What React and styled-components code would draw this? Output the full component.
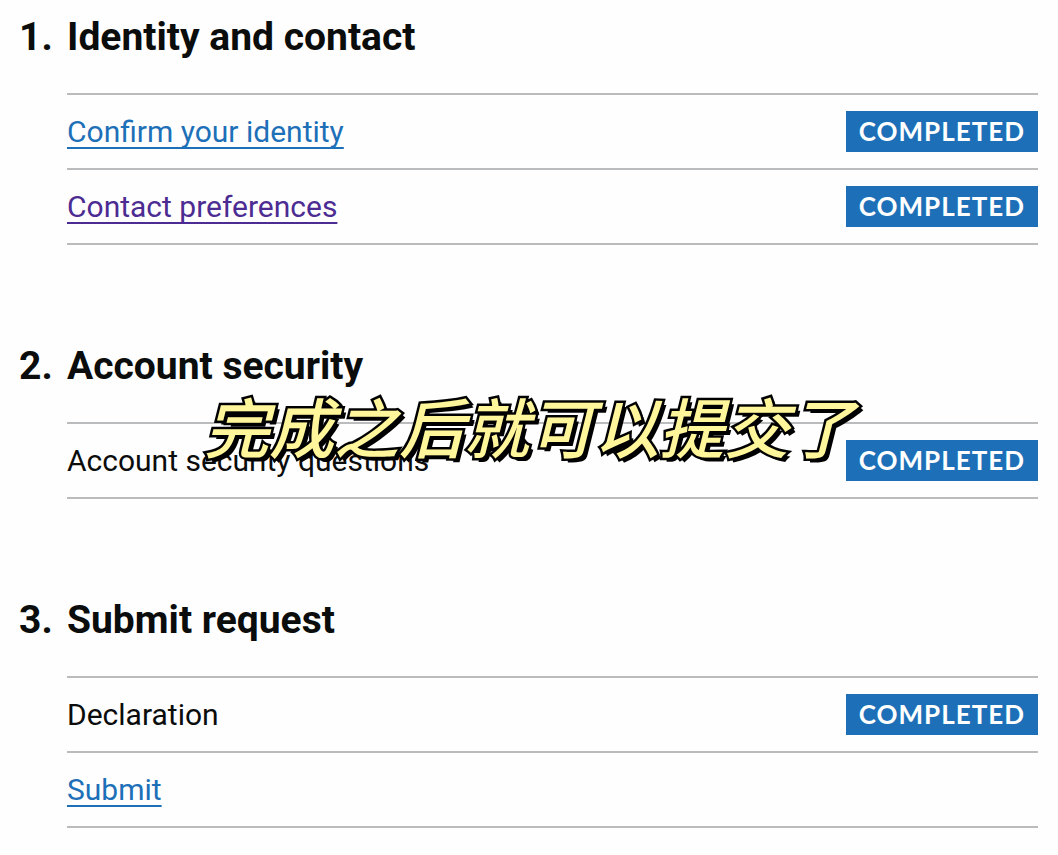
import React from "react";
import styled, { createGlobalStyle, ThemeProvider } from "styled-components";

const theme = {
  text: "#0b0c0c",
  link: "#1d70b8",
  visited: "#4c2c92",
  border: "#b9bbbc",
  tag: "#1d70b8",
  caption: "#fff59b",
};

const GlobalStyle = createGlobalStyle`
  body {
    margin: 0;
    background: #fefefe;
    color: ${theme.text};
    font-family: Roboto, "Liberation Sans", sans-serif;
    font-size: 30px;
    line-height: 40px;
  }
`;

const Page = styled.main`
  padding: 17px 20px 20px 19px;
`;

const Sections = styled.ol`
  list-style: none;
  margin: 0;
  padding: 0;
  display: flex;
  flex-direction: column;
  gap: 101px;
`;

const Heading = styled.h2`
  display: flex;
  margin: 0 0 36px;
  font-size: 39px;
  line-height: 40px;
  font-weight: 700;
`;

const Number = styled.span`
  flex: 0 0 48px;
`;

const Tasks = styled.ul`
  list-style: none;
  margin: 0 0 0 48px;
  padding: 0;
  border-top: 2px solid ${({ theme }) => theme.border};
`;

const Task = styled.li`
  display: flex;
  align-items: center;
  justify-content: space-between;
  box-sizing: border-box;
  min-height: 75px;
  padding: 16px 0;
  border-bottom: 2px solid ${({ theme }) => theme.border};
`;

const TaskLink = styled.a`
  color: ${({ theme, $visited }) => ($visited ? theme.visited : theme.link)};
  text-decoration-thickness: 2px;
  text-underline-offset: 5px;
  text-decoration-skip-ink: none;
`;

const Tag = styled.strong`
  padding: 0 13px;
  background: ${({ theme }) => theme.tag};
  color: #fff;
  font-family: Lato, sans-serif;
  font-size: 26px;
  line-height: 41px;
  font-weight: 700;
  letter-spacing: 1px;
  text-transform: uppercase;
`;

const CaptionLayer = styled.div`
  position: fixed;
  inset: 0;
  display: flex;
  align-items: center;
  justify-content: center;
  pointer-events: none;
`;

const Caption = styled.p`
  margin: 0;
  padding-bottom: 6px;
  color: ${({ theme }) => theme.caption};
  font-family: "Noto Sans CJK SC", sans-serif;
  font-size: 65px;
  line-height: 80px;
  font-style: italic;
  font-weight: 500;
  white-space: nowrap;
  -webkit-text-stroke: 5px #000;
  paint-order: stroke fill;
  text-shadow: 2px 2px 0 #000, 4px 4px 0 #000;
`;

const sections = [
  {
    title: "Identity and contact",
    tasks: [
      { name: "Confirm your identity", href: "#identity", completed: true },
      { name: "Contact preferences", href: "#contact", visited: true, completed: true },
    ],
  },
  {
    title: "Account security",
    tasks: [{ name: "Account security questions", completed: true }],
  },
  {
    title: "Submit request",
    tasks: [
      { name: "Declaration", completed: true },
      { name: "Submit", href: "#submit" },
    ],
  },
];

const App = () => (
  <ThemeProvider theme={theme}>
    <GlobalStyle />
    <Page>
      <Sections>
        {sections.map(({ title, tasks }, index) => (
          <li key={title}>
            <Heading>
              <Number>{index + 1}.</Number>
              <span>{title}</span>
            </Heading>
            <Tasks>
              {tasks.map(({ name, href, visited, completed }) => (
                <Task key={name}>
                  {href ? (
                    <TaskLink href={href} $visited={visited}>
                      {name}
                    </TaskLink>
                  ) : (
                    <span>{name}</span>
                  )}
                  {completed && <Tag>Completed</Tag>}
                </Task>
              ))}
            </Tasks>
          </li>
        ))}
      </Sections>
    </Page>
    <CaptionLayer>
      <Caption lang="zh-CN">完成之后就可以提交了</Caption>
    </CaptionLayer>
  </ThemeProvider>
);

export default App;
